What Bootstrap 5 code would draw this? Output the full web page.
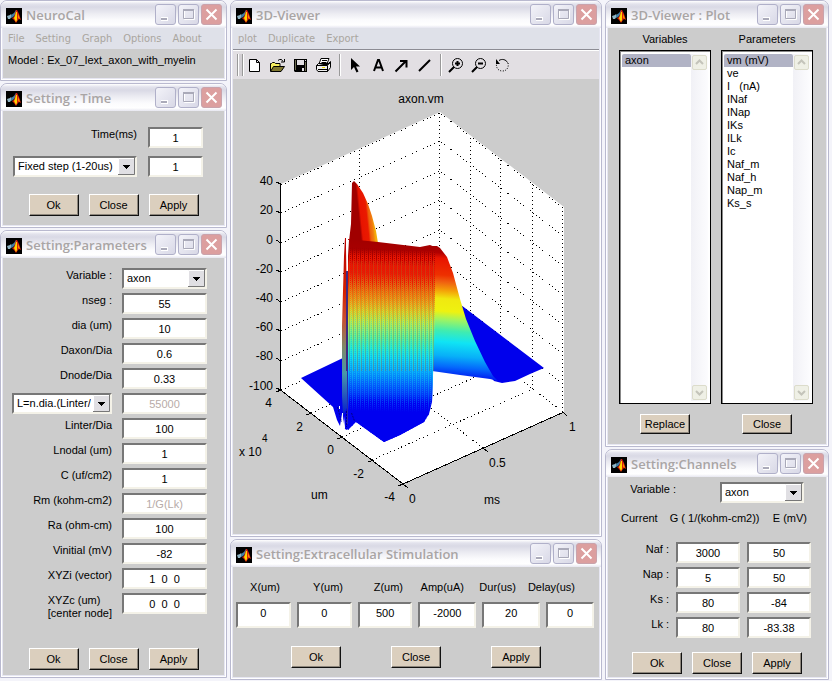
<!DOCTYPE html>
<html lang="en">
<head>
<meta charset="utf-8">
<meta name="viewport" content="width=device-width, initial-scale=1">
<title>NeuroCal</title>
<link href="https://cdn.jsdelivr.net/npm/bootstrap@5.3.0/dist/css/bootstrap.min.css" rel="stylesheet">
<style>
body{font-family:"Liberation Sans",Arial,sans-serif;font-size:11px;line-height:13px;color:#000;background:#f4f4fa}
.desk{display:grid;grid-template-columns:227fr 372fr 224fr;gap:3px;padding-right:3px;align-items:start}
.stack{gap:2px}
.win{border:1px solid #b9b9cf;border-radius:7px 7px 0 0;background:#e6e6f2;padding:0 2px 2px;box-shadow:inset 1px -1px 0 #fff,inset -1px 0 0 #fff}
.title-bar{height:27px;margin:0 -2px;padding:3px 4px 0 5px;border-radius:6px 6px 0 0;gap:4px;background:linear-gradient(#fff 0,#e2e2ec 3px,#d9d9e5 6px,#ededf3 13px,#fbfbfd 19px,#fff 24px,#e6e6f0 27px)}
.title-bar h1{font:600 13px/22px "Open Sans","Noto Sans",sans-serif;color:#a9a5a5;margin:0}
.win-btns{gap:2px}
.win-btn{width:21px;height:21px;padding:0;border:1px solid #b0b0c9;border-radius:3px;background:linear-gradient(135deg,#f3f3f9,#d8d8e6);display:flex}
.win-btn svg{width:19px;height:19px}
.win-btn.shut{background:#dc9f9f;border-color:#c9a3ac}
.pane{background:#ccc}
.menu-bar{background:#dfe1e9;height:21px;padding:0 5px;font-family:"DejaVu Sans Condensed","Noto Sans",sans-serif;gap:11px}
.menu-bar a{color:#aaa69f;text-decoration:none;line-height:21px}
.field{width:100%;height:21px;padding:0 3px;border:2px solid;border-color:#777 #f4f2e8 #f4f2e8 #777;border-radius:0;background:#fff;font-size:11px;line-height:15px;color:#000;text-align:center;box-shadow:none}
.field:disabled{background:#fff;color:#b7aba8;opacity:1}
.field.tall{height:26px;padding-bottom:5px}
.drop{text-align:left;appearance:none;padding:0 19px 0 3px;background:#fff url("data:image/svg+xml,%3Csvg xmlns='http://www.w3.org/2000/svg' width='17' height='17'%3E%3Cpath fill='%23e0dfe3' d='M0 0h17v17H0z'/%3E%3Cpath fill='none' stroke='%23fff' d='M.5 16V.5H16'/%3E%3Cpath fill='none' stroke='%23777' d='M0 16.5h16.5V0'/%3E%3Cpath d='M5 7h7v1h-1v1h-1v1H9v1H8v-1H7V9H6V8H5z'/%3E%3C/svg%3E") no-repeat right center}
.push{width:50px;height:22px;padding:0;border:1px solid;border-color:#fff #111 #111 #fff;border-radius:0;background:#dbcfbe;box-shadow:inset -1px -1px 0 #8d867c;font-size:11px;line-height:18px;color:#000}
.push.low{height:20px}
.push:hover{background:#dbcfbe}
.push-row{display:flex;justify-content:center;gap:10px}
.push-row.wide{gap:50px}
.win label,.heads{padding-top:1px}
.model{padding:5px 5px 11px}
.time-form{padding:16px 21px 0 10px}
.time-grid{display:grid;grid-template-columns:124fr 55fr;gap:8px 11px}
.time-form + .push-row{padding:17px 0 9px}
.param-grid{display:grid;grid-template-columns:100fr 85fr;grid-auto-rows:21px;gap:4px 10px;padding:10px 17px 34px 9px}
.param-grid label,.chan-grid label,.time-grid label{text-align:right}
.param-win .push-row{padding-bottom:5px}
.tool-bar{background:#e2dfe3;border-top:1px solid #8c8c94;height:30px;padding:4px 0 1px 4px;box-shadow:inset 0 1px 0 #fff}
.grip{width:6px;height:22px;border:solid #999;border-width:0 1px;box-shadow:inset 1px 0 0 #fff,1px 0 0 #fff;background:#d2cfd3}
.tool{width:23px;height:23px;padding:3px;border:0;background:none;display:flex}
.tool svg{width:17px;height:17px}
.tool-sep{width:1px;height:22px;margin:0 4px;background:#999;box-shadow:1px 0 0 #fff}
.plot{display:block;width:100%;height:auto;font-size:12px}
.stim-heads{display:grid;grid-template-columns:47fr 63fr 60fr 61fr 52fr 59fr 24fr;text-align:right;padding-top:13px}
.stim-grid{display:grid;grid-template-columns:55fr 55fr 55fr 58fr 58fr 48fr;gap:6px;padding:8px 5px 18px 3px}
.stim-win .push-row{padding-bottom:9px}
.plot-pane{display:grid;grid-template-columns:1fr 1fr;gap:10px;padding:4px 13px 10px 11px}
.list-frame{display:flex;border:1px solid #000;height:354px;margin:4px 0 10px;background:#fff;padding:3px 2px 2px;box-shadow:inset 1px 1px 0 #888}
.list-box{flex:1 1 0;min-width:0;border:0;padding:0;overflow:hidden;outline:0;background:#fff;color:#000;font-size:11px}
.list-box option{padding:0 3px;line-height:13px;height:13px;min-height:13px;color:#000}
.list-box option:checked{background:linear-gradient(#b1b3c5,#b1b3c5);color:#000}
.scroller{width:17px;background:linear-gradient(90deg,#f1f1f6,#fcfcfe);padding:1px}
.scroller button{width:15px;height:15px;padding:0;border:1px solid #dcdccb;border-radius:2px;background:#eff0e6;display:flex}
.scroller svg{width:13px;height:13px}
.chan-top{display:grid;grid-template-columns:68fr 84fr;column-gap:44px;padding:5px 22px 9px 0;text-align:right}
.heads{display:flex;padding:0 19px 17px 13px}
.heads .cond{margin-left:12px}
.chan-grid{display:grid;grid-template-columns:61fr 64fr 64fr;gap:4px 7px;padding:0 15px 14px 0}
.chan-win .push-row{padding-bottom:3px}
</style>
<script src="https://cdn.jsdelivr.net/npm/bootstrap@5.3.0/dist/js/bootstrap.bundle.min.js"></script>
</head>
<body>
<svg width="0" height="0" class="d-none" aria-hidden="true">
  <symbol id="logo" viewBox="0 0 16 16">
    <path d="M0 0h16v16H0z"/>
    <path fill="#8fb4c4" d="M1 8l3-1 1-1 1 2-2 3H2z"/><path fill="#3f7fa6" d="M5 7l3-2 2-3v4L7 9 5 10z"/>
    <path fill="#d9200c" d="M6 10l2-1 2-7h1l2 4 2 6-2-1-1 1-2 3-2-3z"/>
    <path fill="#ffd800" d="M10 4h1v8l-1 2-1-2-1-2 1-2z"/>
    <path fill="#ff8a00" d="M12 6l1 2 1 3-2-1z"/>
  </symbol>
  <symbol id="w-min" viewBox="0 0 19 19"><path fill="#fff" d="M5 12h7v4H5z"/><path fill="#aaaab9" d="M5 13h6v2H5z"/></symbol>
  <symbol id="w-max" viewBox="0 0 19 19"><path fill="none" stroke="#fff" d="M5.500 5.500h10v9h-10z"/><path fill="none" stroke="#aaaab9" d="M4.500 5.500h10v8h-10z"/><path fill="#aaaab9" d="M4 4h11v2H4z"/></symbol>
  <symbol id="w-shut" viewBox="0 0 19 19"><path stroke="#fff" stroke-width="2" d="M4.500 4.500l10 10M14.500 4.500l-10 10"/></symbol>
</svg>

<main class="desk">
  <div class="stack d-flex flex-column">
    <section class="win">
      <header class="title-bar d-flex">
        <svg width="16" height="16" class="mt-1 flex-shrink-0"><use href="#logo"/></svg><h1>NeuroCal</h1>
        <div class="win-btns d-flex ms-auto"><button class="win-btn" aria-label="Minimize"><svg><use href="#w-min"/></svg></button><button class="win-btn" aria-label="Maximize"><svg><use href="#w-max"/></svg></button><button class="win-btn shut" aria-label="Close window"><svg><use href="#w-shut"/></svg></button></div>
      </header>
      <nav class="menu-bar d-flex"><a href="#">File</a><a href="#">Setting</a><a href="#">Graph</a><a href="#">Options</a><a href="#">About</a></nav>
      <div class="pane model">Model : Ex_07_Iext_axon_with_myelin</div>
    </section>

    <section class="win">
      <header class="title-bar d-flex">
        <svg width="16" height="16" class="mt-1 flex-shrink-0"><use href="#logo"/></svg><h1>Setting : Time</h1>
        <div class="win-btns d-flex ms-auto"><button class="win-btn" aria-label="Minimize"><svg><use href="#w-min"/></svg></button><button class="win-btn" aria-label="Maximize"><svg><use href="#w-max"/></svg></button><button class="win-btn shut" aria-label="Close window"><svg><use href="#w-shut"/></svg></button></div>
      </header>
      <div class="pane">
        <div class="time-form"><div class="time-grid">
          <label for="t1">Time(ms)</label><input class="form-control field" id="t1" value="1">
          <select class="field drop" aria-label="Step mode"><option>Fixed step (1-20us)</option></select><input class="form-control field" aria-label="Step" value="1">
        </div></div>
        <div class="push-row"><button class="btn push">Ok</button><button class="btn push">Close</button><button class="btn push">Apply</button></div>
      </div>
    </section>

    <section class="win param-win">
      <header class="title-bar d-flex">
        <svg width="16" height="16" class="mt-1 flex-shrink-0"><use href="#logo"/></svg><h1>Setting:Parameters</h1>
        <div class="win-btns d-flex ms-auto"><button class="win-btn" aria-label="Minimize"><svg><use href="#w-min"/></svg></button><button class="win-btn" aria-label="Maximize"><svg><use href="#w-max"/></svg></button><button class="win-btn shut" aria-label="Close window"><svg><use href="#w-shut"/></svg></button></div>
      </header>
      <div class="pane">
        <div class="param-grid">
          <label for="p0">Variable :</label><select class="field drop" id="p0"><option>axon</option></select>
          <label for="p1">nseg :</label><input class="form-control field" id="p1" value="55">
          <label for="p2">dia (um)</label><input class="form-control field" id="p2" value="10">
          <label for="p3">Daxon/Dia</label><input class="form-control field" id="p3" value="0.6">
          <label for="p4">Dnode/Dia</label><input class="form-control field" id="p4" value="0.33">
          <select class="field drop" aria-label="Length rule"><option>L=n.dia.(Linter/Dia)</option></select><input class="form-control field" aria-label="Length" value="55000" disabled>
          <label for="p6">Linter/Dia</label><input class="form-control field" id="p6" value="100">
          <label for="p7">Lnodal (um)</label><input class="form-control field" id="p7" value="1">
          <label for="p8">C (uf/cm2)</label><input class="form-control field" id="p8" value="1">
          <label for="p9">Rm (kohm-cm2)</label><input class="form-control field" id="p9" value="1/G(Lk)" disabled>
          <label for="p10">Ra (ohm-cm)</label><input class="form-control field" id="p10" value="100">
          <label for="p11">Vinitial (mV)</label><input class="form-control field" id="p11" value="-82">
          <label for="p12">XYZi (vector)</label><input class="form-control field" id="p12" value="1  0  0">
          <label for="p13" class="text-start ms-auto">XYZc (um)<br>[center node]</label><input class="form-control field" id="p13" value="0  0  0">
        </div>
        <div class="push-row"><button class="btn push">Ok</button><button class="btn push">Close</button><button class="btn push">Apply</button></div>
      </div>
    </section>
  </div>

  <div class="stack d-flex flex-column">
    <section class="win">
      <header class="title-bar d-flex">
        <svg width="16" height="16" class="mt-1 flex-shrink-0"><use href="#logo"/></svg><h1>3D-Viewer</h1>
        <div class="win-btns d-flex ms-auto"><button class="win-btn" aria-label="Minimize"><svg><use href="#w-min"/></svg></button><button class="win-btn" aria-label="Maximize"><svg><use href="#w-max"/></svg></button><button class="win-btn shut" aria-label="Close window"><svg><use href="#w-shut"/></svg></button></div>
      </header>
      <nav class="menu-bar d-flex"><a href="#">plot</a><a href="#">Duplicate</a><a href="#">Export</a></nav>
      <div class="tool-bar d-flex" role="toolbar">
        <div class="grip"></div>
        <button class="tool" aria-label="New"><svg viewBox="0 0 17 17"><path fill="#fff" stroke="#000" d="M3.500 2.500h7l3 3v9h-10zM10.500 2.500v3h3"/></svg></button>
        <button class="tool" aria-label="Open"><svg viewBox="0 0 17 17"><path fill="#f6ee60" stroke="#000" d="M1.500 14V6.500h1l1-1h2l1 1h4.500v3"/><path fill="#807830" stroke="#000" d="M1.500 14.500l3-5h11l-3.500 5z"/><path fill="none" stroke="#000" d="M9 3.500l1.500-1h2l1.500 2M15.500 2v3H12"/></svg></button>
        <button class="tool" aria-label="Save"><svg viewBox="0 0 17 17"><path fill="#000" d="M2 2h13v13H3l-1-1z"/><path fill="#6c6c50" d="M3 3h1v10H3zM13 5h1v9h-1z"/><path fill="#e2dfe3" d="M5 3h7v5H5zM13 3h1v1h-1zM10 11h2v3h-2z"/></svg></button>
        <button class="tool" aria-label="Print"><svg viewBox="0 0 17 17"><path fill="#fff" stroke="#000" d="M4 7l2-5.500h8L12 7z"/><path stroke="#000" d="M7 3.500h5M6.500 5.500h5"/><path fill="#eee" stroke="#000" d="M1.500 8.500l2-2h10l2-2v6l-3 4H3l-1.500-2z"/><path stroke="#000" d="M1.500 8.500H12l3.500-3M12.500 8.500v6M3 12.500h9"/><path stroke="#e8d800" d="M7 10.500h3"/></svg></button>
        <div class="tool-sep"></div>
        <button class="tool" aria-label="Select"><svg viewBox="0 0 17 17"><path d="M4 1v12l3-3 2.500 5.500 2-1L9 9.500h4z"/></svg></button>
        <button class="tool" aria-label="Text"><svg viewBox="0 0 17 17"><path fill="none" stroke="#000" stroke-width="2" d="M4 14L8 3h1l4 11M5 10.500h7"/></svg></button>
        <button class="tool" aria-label="Arrow"><svg viewBox="0 0 17 17"><path fill="none" stroke="#000" stroke-width="2" d="M2.500 14.500L13 4M7 4h6.500v6.500"/></svg></button>
        <button class="tool" aria-label="Line"><svg viewBox="0 0 17 17"><path stroke="#000" stroke-width="2" d="M3 14L14 3"/></svg></button>
        <div class="tool-sep"></div>
        <button class="tool" aria-label="Zoom in"><svg viewBox="0 0 17 17"><circle cx="9.500" cy="6.500" r="5" fill="none" stroke="#000"/><path stroke="#000" stroke-width="2" d="M6 10l-5 5M7 6.500h5M9.500 4v5"/></svg></button>
        <button class="tool" aria-label="Zoom out"><svg viewBox="0 0 17 17"><circle cx="9.500" cy="6.500" r="5" fill="none" stroke="#000"/><path stroke="#000" stroke-width="2" d="M6 10l-5 5M7 6.500h5"/></svg></button>
        <button class="tool" aria-label="Rotate"><svg viewBox="0 0 17 17"><path fill="none" stroke="#000" d="M5 3.500c3-2 7-1 8.500 2"/><path d="M2 2v5h4z"/><path fill="none" stroke="#000" stroke-dasharray="1 1.500" d="M14 6c1 4-1 8-5.500 8S2 10.500 2.500 7"/></svg></button>
      </div>
      <div class="pane">
        <svg class="plot" viewBox="233 80 366 455" role="img" aria-label="Surface plot of axon.vm over um and ms">
          <defs>
            <linearGradient id="jet" gradientUnits="userSpaceOnUse" x1="390" y1="238" x2="386" y2="420">
              <stop offset="0" stop-color="#a00000"/><stop offset=".07" stop-color="#a80000"/><stop offset=".11" stop-color="#e81400"/><stop offset=".2" stop-color="#ec1c00"/><stop offset=".25" stop-color="#ee5a0a"/><stop offset=".31" stop-color="#f08a10"/><stop offset=".36" stop-color="#e8b420"/><stop offset=".41" stop-color="#d2e030"/><stop offset=".47" stop-color="#98f070"/><stop offset=".54" stop-color="#50eca0"/><stop offset=".61" stop-color="#18e8e4"/><stop offset=".67" stop-color="#0cc4f8"/><stop offset=".73" stop-color="#08a0f8"/><stop offset=".8" stop-color="#0464fc"/><stop offset=".86" stop-color="#0238f8"/><stop offset=".91" stop-color="#0000f0"/>
            </linearGradient>
            <linearGradient id="jetShift" href="#jet" gradientTransform="translate(0 9)"/>
            <linearGradient id="jetFold" gradientUnits="userSpaceOnUse" x1="450" y1="246" x2="440" y2="384">
              <stop offset="0" stop-color="#a00000"/><stop offset=".06" stop-color="#b00000"/><stop offset=".1" stop-color="#e81400"/><stop offset=".22" stop-color="#ee3000"/><stop offset=".27" stop-color="#f06010"/><stop offset=".33" stop-color="#f4a008"/><stop offset=".39" stop-color="#f0e810"/><stop offset=".48" stop-color="#eef210"/><stop offset=".54" stop-color="#a0f460"/><stop offset=".62" stop-color="#40ecb0"/><stop offset=".7" stop-color="#10e4f4"/><stop offset=".8" stop-color="#08b0f8"/><stop offset=".88" stop-color="#0468fc"/><stop offset=".96" stop-color="#0010f0"/>
            </linearGradient>
            <linearGradient id="peak" gradientUnits="userSpaceOnUse" x1="350" y1="240" x2="379" y2="237">
              <stop offset=".38" stop-color="#a00000"/><stop offset=".45" stop-color="#e81400"/><stop offset=".65" stop-color="#ea1a00"/><stop offset=".72" stop-color="#ee600a"/><stop offset=".82" stop-color="#f08010"/><stop offset=".87" stop-color="#f4a808"/><stop offset="1" stop-color="#f4c010"/>
            </linearGradient>
            <linearGradient id="sliver" gradientUnits="userSpaceOnUse" x1="0" y1="239" x2="0" y2="420">
              <stop offset="0" stop-color="#b80000"/><stop offset=".3" stop-color="#d42000"/><stop offset=".45" stop-color="#c85030"/><stop offset=".6" stop-color="#808868"/><stop offset=".75" stop-color="#4898a8"/><stop offset="1" stop-color="#0010d0"/>
            </linearGradient>
            <pattern id="cols" width="4" height="4" patternUnits="userSpaceOnUse"><path fill="#fff" d="M0 0h1v4H0zM2 1h1v1H2zM2 3h1v1H2z"/></pattern>
            <mask id="colMask" maskUnits="userSpaceOnUse" x="340" y="235" width="110" height="210"><path fill="url(#cols)" d="M340 235h110v210H340z"/></mask>
            <pattern id="lines" width="4" height="2" patternUnits="userSpaceOnUse"><path fill="#a06a28" opacity=".35" d="M1 0h1v2H1z"/><path fill="#2040a0" opacity=".12" d="M3 0h1v1H3z"/></pattern>
            <clipPath id="midBand"><path d="M340 262h110v110H340z"/></clipPath>
          </defs>
          <path fill="#fff" d="M281 185L440 113l124 95v205l-161 72-122-94z"/>
          <g fill="none" stroke="#000" stroke-dasharray="1 3" shape-rendering="crispEdges">
            <path d="M281 186L440 114 563 209M281 214L440 142 563 237M281 244L440 172 563 267M281 273L440 201 563 296M281 303L440 231 563 326M281 332L440 260 563 355M281 362L440 290 563 385M281 391L440 319 563 413"/>
            <path d="M359.500 151v204M439.500 114v205M470.500 139v204M500.500 161v205M532.500 185v205M562.500 208v205"/>
            <path d="M311 414l161-71M342 438l160-72M372 461l161-71M483 449L360 355"/>
          </g>
          <path fill="none" stroke="#000" shape-rendering="crispEdges" d="M280.500 185v206L403 485l161-72M276 183l5 2M276 212l5 2M276 241l5 3M276 271l5 2M276 300l5 3M276 330l5 2M276 359l5 3M276 389l5 2M276 393l5-2M306 416l6-2M337 440l6-2M368 463l6-2M398 487l5-2M403 485l5 4M483 449l5 4M563 413l4 4"/>
          <path fill="#0000ec" d="M301 379l44-21 85 45-6 20-24 13-16 7-29-21-4 5-4 4-2-1-3-15-2 12-3-6-4-13z"/>
          <path fill="#0000ec" d="M461 306l83 63-14 6-15 7-13 2-8-2-24-30z"/>
          <path fill="url(#jetFold)" d="M432 247l5 0 3 2 7 9 6 16 7 26 6 20 9 22 10 21 8 14 5 5-8-2-30-4-28-4z"/>
          <path fill="url(#peak)" d="M352 184l2-2 3 3 6 9 5 11 4 12 4 15 2 12-29-2 2-17z"/>
          <path id="wall" fill="url(#jet)" d="M348 240l30 3 42 5 10-2 5 2v40l-1 62-2 53-3 12-5 8-24 13-16 7-28-20-4 4-4 4z"/>
          <path fill="url(#jetShift)" mask="url(#colMask)" d="M348 248l72 4 15 1v35l-1 62-2 53-3 12-5 8-24 13-16 7-28-20-4 4-4 4z"/>
          <path fill="url(#lines)" clip-path="url(#midBand)" d="M348 240h87l-1 132h-86z"/>
          <path fill="url(#sliver)" d="M345 239h1v10l1 60v100l-4 8-1-20v-70l2-70z"/>
          <path fill="#fff" d="M347 241h2l-1 16v16h-1z"/>
          <path fill="none" stroke="#402a80" stroke-width="2" d="M347 272v100"/><path stroke="#2828b0" d="M347.500 370v55"/>
          <path stroke="#000088" stroke-width="1" stroke-dasharray="2 1" d="M337.500 408l4 15M346.500 412v16M351.500 414l3 8"/>
          <path fill="#fff" d="M342 414h1v9h-1zM339 407h1v3h-1zM344 417l1 12h-2z"/>
          <g text-anchor="end">
            <text x="273" y="186">40</text><text x="273" y="215">20</text><text x="273" y="245">0</text><text x="273" y="274">-20</text><text x="273" y="303">-40</text><text x="273" y="332">-60</text><text x="273" y="361">-80</text><text x="273" y="391">-100</text>
            <text x="272" y="408">4</text><text x="303" y="432">2</text><text x="334" y="455">0</text><text x="364" y="479">-2</text><text x="395" y="502">-4</text>
          </g>
          <text x="409" y="504">0</text><text x="489" y="468">0.5</text><text x="569" y="432">1</text>
          <text x="239" y="457">x 10</text><text x="262" y="443" font-size="10">4</text>
          <text x="311" y="500">um</text><text x="484" y="505">ms</text>
          <text x="421" y="104" text-anchor="middle">axon.vm</text>
        </svg>
      </div>
    </section>

    <section class="win stim-win">
      <header class="title-bar d-flex">
        <svg width="16" height="16" class="mt-1 flex-shrink-0"><use href="#logo"/></svg><h1>Setting:Extracellular Stimulation</h1>
        <div class="win-btns d-flex ms-auto"><button class="win-btn" aria-label="Minimize"><svg><use href="#w-min"/></svg></button><button class="win-btn" aria-label="Maximize"><svg><use href="#w-max"/></svg></button><button class="win-btn shut" aria-label="Close window"><svg><use href="#w-shut"/></svg></button></div>
      </header>
      <div class="pane">
        <div class="stim-heads"><label for="s1">X(um)</label><label for="s2">Y(um)</label><label for="s3">Z(um)</label><label for="s4">Amp(uA)</label><label for="s5">Dur(us)</label><label for="s6">Delay(us)</label></div>
        <div class="stim-grid"><input class="form-control field tall" id="s1" value="0"><input class="form-control field tall" id="s2" value="0"><input class="form-control field tall" id="s3" value="500"><input class="form-control field tall" id="s4" value="-2000"><input class="form-control field tall" id="s5" value="20"><input class="form-control field tall" id="s6" value="0"></div>
        <div class="push-row wide"><button class="btn push">Ok</button><button class="btn push">Close</button><button class="btn push">Apply</button></div>
      </div>
    </section>
  </div>

  <div class="stack d-flex flex-column">
    <section class="win">
      <header class="title-bar d-flex">
        <svg width="16" height="16" class="mt-1 flex-shrink-0"><use href="#logo"/></svg><h1>3D-Viewer : Plot</h1>
        <div class="win-btns d-flex ms-auto"><button class="win-btn" aria-label="Minimize"><svg><use href="#w-min"/></svg></button><button class="win-btn" aria-label="Maximize"><svg><use href="#w-max"/></svg></button><button class="win-btn shut" aria-label="Close window"><svg><use href="#w-shut"/></svg></button></div>
      </header>
      <div class="pane plot-pane text-center">
        <div><label for="vars">Variables</label>
          <div class="list-frame"><select class="list-box" id="vars" size="20"><option selected>axon</option></select>
            <div class="scroller d-flex flex-column justify-content-between"><button aria-label="Scroll up"><svg viewBox="0 0 13 13"><path fill="none" stroke="#c4c4ba" stroke-width="2" d="M3 8l3.500-3.500L10 8"/></svg></button><button aria-label="Scroll down"><svg viewBox="0 0 13 13"><path fill="none" stroke="#c4c4ba" stroke-width="2" d="M3 5l3.500 3.500L10 5"/></svg></button></div></div>
          <button class="btn push low">Replace</button></div>
        <div><label for="pars">Parameters</label>
          <div class="list-frame"><select class="list-box" id="pars" size="20"><option selected>vm (mV)</option><option>ve</option><option>I &nbsp; (nA)</option><option>INaf</option><option>INap</option><option>IKs</option><option>ILk</option><option>Ic</option><option>Naf_m</option><option>Naf_h</option><option>Nap_m</option><option>Ks_s</option></select>
            <div class="scroller d-flex flex-column justify-content-between"><button aria-label="Scroll up"><svg viewBox="0 0 13 13"><path fill="none" stroke="#c4c4ba" stroke-width="2" d="M3 8l3.500-3.500L10 8"/></svg></button><button aria-label="Scroll down"><svg viewBox="0 0 13 13"><path fill="none" stroke="#c4c4ba" stroke-width="2" d="M3 5l3.500 3.500L10 5"/></svg></button></div></div>
          <button class="btn push low">Close</button></div>
      </div>
    </section>

    <section class="win chan-win">
      <header class="title-bar d-flex">
        <svg width="16" height="16" class="mt-1 flex-shrink-0"><use href="#logo"/></svg><h1>Setting:Channels</h1>
        <div class="win-btns d-flex ms-auto"><button class="win-btn" aria-label="Minimize"><svg><use href="#w-min"/></svg></button><button class="win-btn" aria-label="Maximize"><svg><use href="#w-max"/></svg></button><button class="win-btn shut" aria-label="Close window"><svg><use href="#w-shut"/></svg></button></div>
      </header>
      <div class="pane">
        <div class="chan-top"><label for="cv">Variable :</label><select class="field drop" id="cv"><option>axon</option></select></div>
        <div class="heads"><span>Current</span><span class="cond">G ( 1/(kohm-cm2))</span><span class="ms-auto">E (mV)</span></div>
        <div class="chan-grid">
          <label for="c1">Naf :</label><input class="form-control field" id="c1" value="3000"><input class="form-control field" aria-label="Naf E" value="50">
          <label for="c2">Nap :</label><input class="form-control field" id="c2" value="5"><input class="form-control field" aria-label="Nap E" value="50">
          <label for="c3">Ks :</label><input class="form-control field" id="c3" value="80"><input class="form-control field" aria-label="Ks E" value="-84">
          <label for="c4">Lk :</label><input class="form-control field" id="c4" value="80"><input class="form-control field" aria-label="Lk E" value="-83.38">
        </div>
        <div class="push-row"><button class="btn push">Ok</button><button class="btn push">Close</button><button class="btn push">Apply</button></div>
      </div>
    </section>
  </div>
</main>
</body>
</html>
